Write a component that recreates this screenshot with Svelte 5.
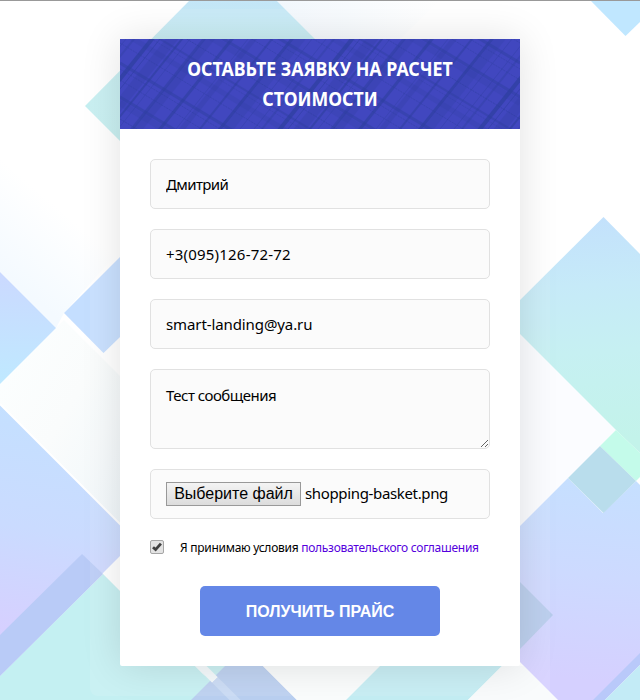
<script>
  let name = $state('Дмитрий');
  let phone = $state('+3(095)126-72-72');
  let email = $state('smart-landing@ya.ru');
  let message = $state('Тест сообщения');

  // [x where the thread crosses the top edge, width, opacity]
  const steep = [
    [6, 1, 0.35], [14, 2, 0.35], [32, 4, 0.7], [40, 1, 0.5], [52, 10, 0.25], [62, 2, 0.6], [70, 1, 0.3],
    [84, 3, 0.5], [90, 8, 0.25], [112, 3, 0.6], [128, 1, 0.3], [134, 5, 0.25],
    [152, 2, 0.5], [172, 3, 0.65], [180, 9, 0.22], [192, 1, 0.35]
  ];
  // [y where the thread crosses the left edge, width, opacity, dashed]
  const shallow = [
    [4, 1, 0.4, 1], [24, 3, 0.45, 0], [30, 1, 0.4, 1], [41, 1, 0.4, 1],
    [58, 3, 0.45, 0], [64, 6, 0.2, 0], [80, 1, 0.5, 1], [96, 2, 0.4, 0],
    [101, 1, 0.3, 1], [112, 5, 0.2, 0]
  ];
  const steepLines = [0, 200, 400].flatMap((o) => steep.map(([x, w, a]) => [x + o, w, a]));
  const shallowLines = [-240, -120, 0].flatMap((o) => shallow.map(([y, w, a, d]) => [y + o, w, a, d]));
</script>

<main>
  <svg class="backdrop" viewBox="0 0 640 700" aria-hidden="true">
    <defs>
      <linearGradient id="top" x1="0" y1="0" x2="0" y2="1">
        <stop offset="0" stop-color="#c4e6f8" /><stop offset=".3" stop-color="#c6eef2" /><stop offset="1" stop-color="#c3eff0" />
      </linearGradient>
      <linearGradient id="leftTop" x1="0" y1="0" x2="0" y2="1">
        <stop offset="0" stop-color="#cbd9ff" /><stop offset="1" stop-color="#bfe9ff" />
      </linearGradient>
      <linearGradient id="violet" gradientUnits="userSpaceOnUse" x1="60" y1="410" x2="20" y2="650">
        <stop offset="0" stop-color="#c4e0ff" /><stop offset=".5" stop-color="#cadbff" /><stop offset="1" stop-color="#d8ceff" />
      </linearGradient>
      <linearGradient id="right" gradientUnits="userSpaceOnUse" x1="600" y1="217" x2="615" y2="440">
        <stop offset="0" stop-color="#c3e1fc" /><stop offset=".3" stop-color="#c6eaf8" /><stop offset=".6" stop-color="#c6f0f2" /><stop offset="1" stop-color="#c3f3ea" />
      </linearGradient>
      <linearGradient id="rightLow" gradientUnits="userSpaceOnUse" x1="600" y1="470" x2="580" y2="680">
        <stop offset="0" stop-color="#c5e0ff" /><stop offset=".5" stop-color="#cddaff" /><stop offset="1" stop-color="#d5d0ff" />
      </linearGradient>
      <linearGradient id="grey" x1="0" y1="0" x2="1" y2="1">
        <stop offset="0" stop-color="#fcffff" /><stop offset=".5" stop-color="#fafcfc" /><stop offset="1" stop-color="#f0f7fa" />
      </linearGradient>
      <linearGradient id="fade" gradientUnits="userSpaceOnUse" x1="0" y1="270" x2="55" y2="205">
        <stop offset="0" stop-color="#f4faff" /><stop offset="1" stop-color="#fff" />
      </linearGradient>
      <linearGradient id="topFade" x1="0" y1="0" x2="1" y2="0">
        <stop offset="0" stop-color="#f2f8fd" /><stop offset="1" stop-color="#fff" />
      </linearGradient>
    </defs>
    <rect width="640" height="700" fill="#fff" />
    <path d="M0 130 L120 250 L64 313 L56 328 L0 272Z" fill="url(#fade)" />
    <path d="M56 328 L64 320 L120 376 V524 L0 404 V384Z" fill="url(#grey)" />
    <path d="M276 0 H440 L400 39 H315Z" fill="url(#topFade)" />
    <path d="M190 0 H276 L417 141 H120 L85 106Z" fill="url(#top)" />
    <path d="M590 0 H640 V22 L625.500 36Z" fill="#c0e7ff" />
    <path d="M0 272 L56 328 L0 384Z" fill="url(#leftTop)" />
    <path d="M120 257 L64 313 L103.500 353 L120 337Z" fill="#c4deff" />
    <path d="M0 404 L136 540 L0 676Z" fill="url(#violet)" />
    <path d="M0 404 L136 540" stroke="#fff" stroke-width="2" />
    <path d="M103 574 L229 700 H0 V676Z" fill="#c4f0f2" />
    <path d="M82 554 L103 574 L0 676 V635Z" fill="#b9cbf7" />
    <path d="M195 660 H230 V664 L213 690Z" fill="#c8f0f2" />
    <path d="M227 664 H261 L297 700 H191Z" fill="#b9cff0" />
    <path d="M190 655 L215 680" stroke="#f4fafc" stroke-width="8" />
    <path d="M215 680 L245 710" stroke="#c8daf4" stroke-width="8" />
    <path d="M263 666 H380 L346 700 H297Z" fill="#fafcfc" />
    <path d="M380 666 H502 L468 700 H346Z" fill="#c3edf3" />
    <path d="M502 666 H524 L558 700 H468Z" fill="#f9fbfc" />
    <path d="M520 401 V526 L616 430 L520 334Z" fill="#fbfcff" />
    <path d="M603.500 217 L503 317 L616 430 L640 453 V254Z" fill="url(#right)" />
    <path d="M616 430 L600 446 L636 481 L640 477 V453Z" fill="#c4fbea" />
    <path d="M520 526 L568 478 L603 513 L636 481 L640 485 V654 L594 700 H558 L520 662Z" fill="url(#rightLow)" />
    <path d="M600 446 L636 481 L603.500 513 L568 478Z" fill="#b9ddec" />
    <path d="M520 582 L553 615 L520 649Z" fill="#b6cbec" />
    <path d="M640 653 V665 L605 700 H593Z" fill="#b9c9fa" />
    <path d="M640 665 V700 H605Z" fill="#c3ebf6" />
    <rect width="640" height="1" fill="#999" />
  </svg>

  <form class="card" onsubmit={(e) => e.preventDefault()}>
    <header>
      <svg class="plaid" viewBox="0 0 400 90" aria-hidden="true">
        {#each steepLines as [x, w, a]}
          <line x1={x + 8} y1="-10" x2={x - 80} y2="100" stroke="#2e3f9f" stroke-width={w} opacity={a} />
        {/each}
        {#each shallowLines as [y, w, a, d]}
          <line x1="0" y1={y} x2="400" y2={y + 240} stroke="#2e3f9f" stroke-width={w} opacity={a} stroke-dasharray={d ? '2 1' : null} />
        {/each}
      </svg>
      <h1>ОСТАВЬТЕ ЗАЯВКУ НА РАСЧЕТ<br />СТОИМОСТИ</h1>
    </header>
    <div class="fields">
      <input class="box name" type="text" bind:value={name} />
      <input class="box phone" type="text" bind:value={phone} />
      <input class="box email" type="text" bind:value={email} />
      <textarea class="box" bind:value={message}></textarea>
      <div class="box file">
        <button type="button" class="choose">Выберите файл</button>
        <span>shopping-basket.png</span>
      </div>
      <label class="agree">
        <svg class="check" viewBox="0 0 14 14" aria-hidden="true">
          <rect x=".5" y=".5" width="13" height="13" rx="1.500" fill="#e3e3e3" stroke="#a6a6a6" />
          <path d="M3 7.200 L5.600 9.600 L10.900 3.600" fill="none" stroke="#404040" stroke-width="2.800" />
        </svg>
        <span class="terms">Я принимаю условия <a href="#terms">пользовательского соглашения</a></span>
      </label>
      <button class="submit">ПОЛУЧИТЬ ПРАЙС</button>
    </div>
  </form>
</main>

<style>
  :global(body) { margin: 0; }
  main {
    position: relative;
    width: 640px;
    height: 700px;
    overflow: hidden;
    display: flex;
    justify-content: center;
    align-items: flex-start;
    padding-top: 39px;
    box-sizing: border-box;
    font-family: 'Noto Sans', 'Open Sans', sans-serif;
  }
  .backdrop { position: absolute; inset: 0; width: 640px; height: 700px; }
  .card {
    position: relative;
    width: 400px;
    height: 627px;
    background: #fff;
    border-radius: 0 0 2px 2px;
    box-shadow: 0 0 40px rgba(0, 0, 0, 0.12), 0 0 0 30px rgba(255, 255, 255, 0.1);
  }
  header {
    position: relative;
    height: 90px;
    background: #4147bf;
    overflow: hidden;
  }
  .plaid { position: absolute; inset: 0; width: 400px; height: 90px; }
  h1 {
    position: relative;
    margin: 0;
    padding-top: 15px;
    font-size: 19.500px;
    line-height: 30px;
    font-weight: 700;
    text-align: center;
    color: #fff;
    white-space: nowrap;
    transform: scaleX(0.91);
  }
  .fields {
    display: flex;
    flex-direction: column;
    gap: 20px;
    padding: 30px;
  }
  .box {
    display: block;
    width: 340px;
    height: 50px;
    box-sizing: border-box;
    margin: 0;
    padding: 0 15px;
    border: 1px solid #e1e1e1;
    border-radius: 5px;
    background: #fbfbfb;
    color: #000;
    font-family: inherit;
    font-size: 15px;
    letter-spacing: -0.35px;
    outline: none;
  }
  .name { letter-spacing: -0.6px; }
  .phone { letter-spacing: 0.2px; }
  .email { letter-spacing: -0.1px; }
  textarea.box {
    height: 80px;
    padding-top: 15px;
    line-height: 21px;
    letter-spacing: -0.5px;
    resize: both;
  }
  .file {
    display: flex;
    align-items: center;
    gap: 4px;
    white-space: nowrap;
  }
  .file span { margin-top: -2px; }
  .choose {
    width: 135px;
    height: 24px;
    padding: 0;
    border: 1px solid #999;
    border-radius: 0;
    background: linear-gradient(#f4f4f4, #dcdcdc);
    font-family: 'Liberation Sans', Arial, sans-serif;
    font-size: 16px;
    line-height: 20px;
    color: #000;
  }
  .agree {
    display: flex;
    align-items: center;
    height: 16px;
    gap: 16px;
    font-size: 12px;
    white-space: nowrap;
    color: #000;
    letter-spacing: -0.27px;
  }
  .check { width: 14px; height: 14px; }
  a { color: #5500dd; text-decoration: none; }
  .submit {
    align-self: center;
    width: 240px;
    height: 50px;
    margin-top: 11px;
    padding: 2px 0 0;
    border: 0;
    border-radius: 5px;
    background: #6487e7;
    color: #fff;
    font: 700 16px 'Liberation Sans', Arial, sans-serif;
  }
</style>
